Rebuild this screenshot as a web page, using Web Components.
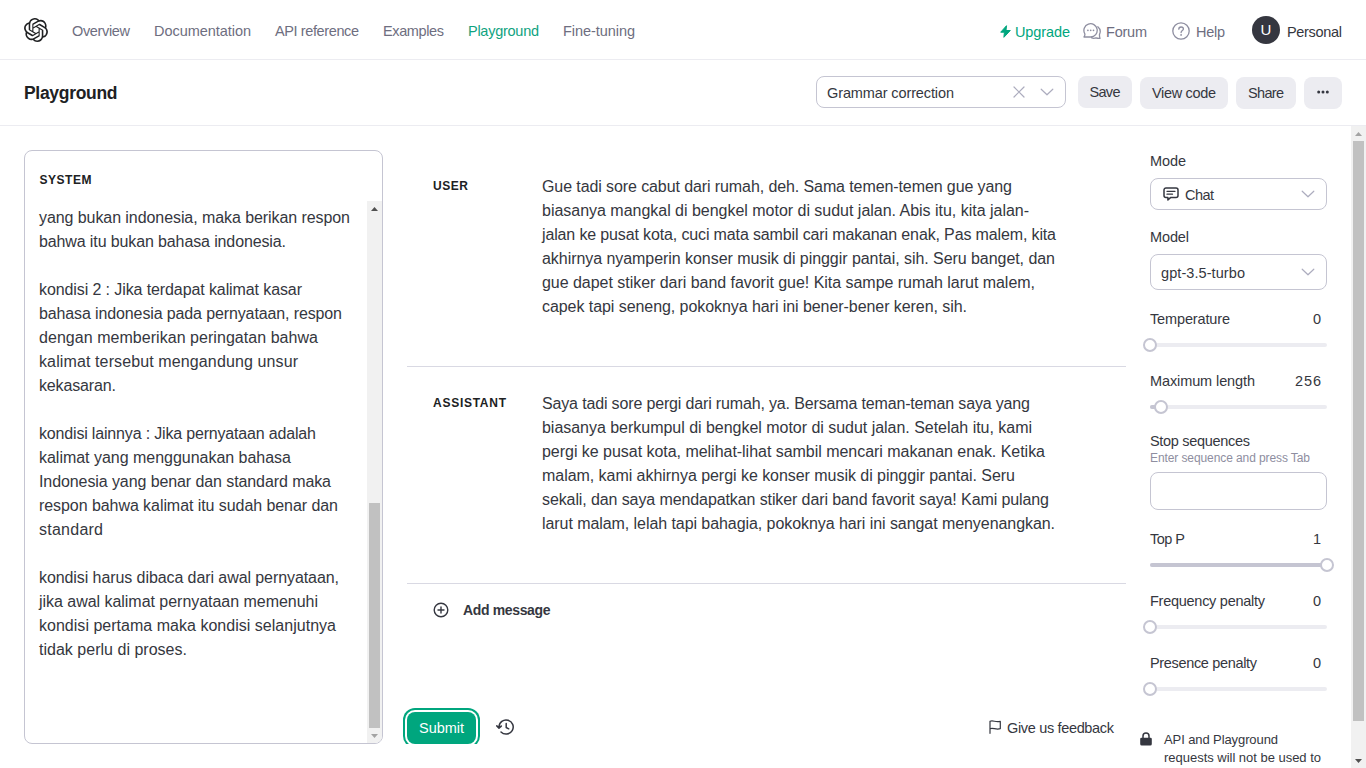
<!DOCTYPE html>
<html lang="en">
<head>
<meta charset="utf-8">
<title>Playground</title>
<style>
html,body{margin:0;height:100%;overflow:hidden;background:#fff}
body{font:14.5px/20px "Liberation Sans",Arial,sans-serif;color:#353740}
</style>
</head>
<body>
<play-app></play-app>
<script>
const define=(name,html,init)=>{
  const t=document.createElement('template');
  t.innerHTML=html;
  customElements.define(name,class extends HTMLElement{
    connectedCallback(){
      if(this.shadowRoot)return;
      const r=this.attachShadow({mode:'open'});
      r.append(t.content.cloneNode(true));
      if(init)init(this,r);
    }
  });
};

/* A single line of text, tracked so that it measures w pixels. */
define('t-line',`<style>:host{display:block;white-space:pre;flex:none}span{display:inline-block}</style><span><slot></slot></span>`,(el,r)=>{
  const w=+el.getAttribute('w'),s=r.querySelector('span');
  const n=el.textContent.length;
  if(w&&n>1){
    const nat=s.getBoundingClientRect().width;
    s.style.letterSpacing=((w-nat)/(n-1)).toFixed(4)+'px';
    el.style.width=w+'px';
  }
});

const icons={
 logo:['0 0 24 24','<path fill="currentColor" d="M22.2819 9.8211a5.9847 5.9847 0 0 0-.5157-4.9108 6.0462 6.0462 0 0 0-6.5098-2.9A6.0651 6.0651 0 0 0 4.9807 4.1818a5.9847 5.9847 0 0 0-3.9977 2.9 6.0462 6.0462 0 0 0 .7427 7.0966 5.98 5.98 0 0 0 .511 4.9107 6.051 6.051 0 0 0 6.5146 2.9001A5.9847 5.9847 0 0 0 13.2599 24a6.0557 6.0557 0 0 0 5.7718-4.2058 5.9894 5.9894 0 0 0 3.9977-2.9001 6.0557 6.0557 0 0 0-.7475-7.0729zm-9.022 12.6081a4.4755 4.4755 0 0 1-2.8764-1.0408l.1419-.0804 4.7783-2.7582a.7948.7948 0 0 0 .3927-.6813v-6.7369l2.02 1.1686a.071.071 0 0 1 .038.052v5.5826a4.504 4.504 0 0 1-4.4945 4.4944zm-9.6607-4.1254a4.4708 4.4708 0 0 1-.5346-3.0137l.142.0852 4.783 2.7582a.7712.7712 0 0 0 .7806 0l5.8428-3.3685v2.3324a.0804.0804 0 0 1-.0332.0615L9.74 19.9502a4.4992 4.4992 0 0 1-6.1408-1.6464zM2.3408 7.8956a4.485 4.485 0 0 1 2.3655-1.9728V11.6a.7664.7664 0 0 0 .3879.6765l5.8144 3.3543-2.0201 1.1685a.0757.0757 0 0 1-.071 0l-4.8303-2.7865A4.504 4.504 0 0 1 2.3408 7.872zm16.5963 3.8558L13.1038 8.364 15.1192 7.2a.0757.0757 0 0 1 .071 0l4.8303 2.7913a4.4944 4.4944 0 0 1-.6765 8.1042v-5.6772a.79.79 0 0 0-.407-.667zm2.0107-3.0231l-.142-.0852-4.7735-2.7818a.7759.7759 0 0 0-.7854 0L9.409 9.2297V6.8974a.0662.0662 0 0 1 .0284-.0615l4.8303-2.7866a4.4992 4.4992 0 0 1 6.6802 4.66zM8.3065 12.863l-2.02-1.1638a.0804.0804 0 0 1-.038-.0567V6.0742a4.4992 4.4992 0 0 1 7.3757-3.4537l-.142.0805L8.704 5.459a.7948.7948 0 0 0-.3927.6813zm1.0976-2.3654l2.602-1.4998 2.6069 1.4998v2.9994l-2.5974 1.4997-2.6067-1.4997Z"/>'],
 bolt:['0 0 11 13','<path fill="currentColor" stroke="currentColor" stroke-linejoin="round" d="M6.500 .7.7 7.200h3.700L3.900 12.300 10.300 5.500H6z"/>'],
 forum:['0 0 18 17','<path fill="none" stroke="currentColor" stroke-width="1.300" stroke-linecap="round" stroke-linejoin="round" d="M1 14h6.700A6.650 6.650 0 1 0 1.700 10.500C2.100 11.500 1.800 12.900 1 14zM14.800 3.800a6.300 6.300 0 0 1 1.700 7.600c-.1 1.400.1 2.800.5 4-1.400.1-2.800 0-4-.5-1.400.5-3 .5-4.300 0"/><g fill="currentColor"><circle cx="4.900" cy="7.300" r=".85"/><circle cx="7.700" cy="7.300" r=".85"/><circle cx="10.500" cy="7.300" r=".85"/></g>'],
 help:['0 0 18 18','<g fill="none" stroke="currentColor" stroke-width="1.300" stroke-linecap="round"><circle cx="9" cy="9" r="8.200"/><path d="M6.800 7.200c0-1.300 1-2.200 2.300-2.200s2.300.9 2.300 2c0 1.500-2.300 1.700-2.300 3.500"/></g><circle cx="9.100" cy="12.900" r=".9" fill="currentColor"/>'],
 x:['0 0 12 12','<path fill="none" stroke="currentColor" stroke-width="1.200" stroke-linecap="round" d="m1 1 10 10M11 1 1 11"/>'],
 chev:['0 0 14 8','<path fill="none" stroke="currentColor" stroke-width="1.200" stroke-linecap="round" stroke-linejoin="round" d="m1.200 1.200 5.800 5.600 5.800-5.600"/>'],
 dots:['0 0 12 4','<g fill="currentColor"><circle cx="1.700" cy="2" r="1.500"/><circle cx="6" cy="2" r="1.500"/><circle cx="10.300" cy="2" r="1.500"/></g>'],
 chat:['0 0 16 14','<g fill="none" stroke="currentColor" stroke-width="1.500" stroke-linejoin="round" stroke-linecap="round"><path d="M3 .9h10a2 2 0 0 1 2 2v5.700a2 2 0 0 1-2 2H7.500L4.900 13v-2.400H3a2 2 0 0 1-2-2V2.900a2 2 0 0 1 2-2z"/><path d="M4 4.300h8M4 7.200h5.500" stroke-width="1.300"/></g>'],
 plus:['0 0 16 16','<g fill="none" stroke="currentColor" stroke-width="1.400" stroke-linecap="round"><circle cx="8" cy="8" r="6.800"/><path d="M8 5v6M5 8h6"/></g>'],
 history:['0 0 18 16','<g fill="none" stroke="currentColor" stroke-width="1.500" stroke-linecap="round" stroke-linejoin="round"><path d="M3 8a7.100 7.100 0 1 1 2 4.950M.8 6.900 3 9.100l2.300-2M10.200 4.600v3.900l2.500 1.300"/></g>'],
 flag:['0 0 12 14','<path fill="none" stroke="currentColor" stroke-width="1.200" stroke-linecap="round" stroke-linejoin="round" d="M1 13.300V1.300c3.300-1.400 5.500 1.400 10.300 0v7.400C6.500 10.100 4.300 7.300 1 8.700"/>'],
 lock:['0 0 12 14','<path fill="currentColor" d="M1.500 5.700h9a1.300 1.300 0 0 1 1.300 1.300v5a1.500 1.500 0 0 1-1.500 1.500H1.700A1.500 1.500 0 0 1 .2 12V7a1.300 1.300 0 0 1 1.300-1.300z"/><path fill="none" stroke="currentColor" stroke-width="1.500" d="M3 6V3.900a3 3 0 0 1 6 0V6"/>'],
 up:['0 0 7 4','<path fill="currentColor" d="M0 4 3.500 0 7 4z"/>'],
 down:['0 0 7 4','<path fill="currentColor" d="M0 0h7L3.500 4z"/>']
};
define('ui-icon',`<style>:host{display:block;flex:none}svg{display:block;width:100%;height:100%}</style><svg></svg>`,(el,r)=>{
  const [box,body]=icons[el.getAttribute('name')],s=r.querySelector('svg');
  s.setAttribute('viewBox',box);s.innerHTML=body;
  const [, ,w,h]=box.split(' ');
  el.style.width=(el.getAttribute('width')||w)+'px';
  el.style.height=(el.getAttribute('height')||h)+'px';
});

define('scroll-bar',`<style>
:host{display:flex;flex-direction:column;width:15px;background:#f1f1f1;flex:none}
.b{height:15px;flex:none;display:grid;place-items:center;color:#505050}
.b.off{color:#a3a3a3}
.s{flex:1;min-height:0;display:flex;flex-direction:column}
.t{width:11px;margin-left:2px;background:#c1c1c1}
</style><div class="b"><ui-icon name="up"></ui-icon></div><div class="s"><div class="t"></div></div><div class="b"><ui-icon name="down"></ui-icon></div>`,(el,r)=>{
  const t=r.querySelector('.t');
  t.style.height=el.getAttribute('size')+'px';
  t.style.marginTop=(el.getAttribute('offset')||0)+'px';
  const end=el.getAttribute('end');
  if(end)r.querySelectorAll('.b')[end==='top'?0:1].classList.add('off');
});

define('top-nav',`<style>
:host{display:flex;align-items:center;height:59px;padding:0 24px;border-bottom:1px solid #ececf1;color:#6e6e80;font-size:14.5px;line-height:20px;box-sizing:content-box}
nav{display:flex;gap:24px;margin-left:24px;padding-top:3px}
.on{color:#10a37f}
.r{margin-left:auto;display:flex;align-items:center}
.r t-line{padding-top:4px}
.av{width:28px;height:28px;border-radius:50%;background:#353740;color:#fff;display:grid;place-items:center;font-size:15px;margin:0 7px 0 27px}
.me{color:#353740}
.up{color:#00a67e}
</style>
<ui-icon name="logo" width="24" height="24" style="color:#202123"></ui-icon>
<nav><t-line w="58">Overview</t-line><t-line w="97">Documentation</t-line><t-line w="84">API reference</t-line><t-line w="61">Examples</t-line><t-line class="on" w="71">Playground</t-line><t-line w="72">Fine-tuning</t-line></nav>
<div class="r"><ui-icon class="up" name="bolt" style="margin:3px 4px 0 0"></ui-icon><t-line class="up" w="55">Upgrade</t-line>
<ui-icon name="forum" style="margin:3px 5px 0 13px;color:#8e8ea0"></ui-icon><t-line w="41">Forum</t-line>
<ui-icon name="help" style="margin:3px 6px 0 25px;color:#8e8ea0"></ui-icon><t-line w="29">Help</t-line>
<div class="av">U</div><t-line class="me" w="55">Personal</t-line></div>`);

define('ui-button',`<style>
:host{display:flex;align-items:center;justify-content:center;height:32px;border-radius:8px;background:#ececf1;color:#353740}
</style><slot></slot>`);

define('ui-select',`<style>
:host{display:flex;align-items:center;box-sizing:border-box;height:32px;border:1px solid #c5c5d2;border-radius:8px;padding:0 11px 0 10px;color:#353740}
ui-icon{color:#acacbe;margin-left:auto}
</style><slot></slot><ui-icon name="chev"></ui-icon>`);

define('title-bar',`<style>
:host{display:flex;align-items:center;height:65px;padding:0 24px;border-bottom:1px solid #ececf1;}
h1{margin:1px auto 0 0;font-size:17.5px;line-height:24px;font-weight:700;color:#202123}
ui-select{width:250px;margin:-1px 12px 0 0}
ui-select ui-icon{margin-left:59px;margin-right:0;color:#acacbe}
ui-button{margin:1px 0 0 8px}
</style>
<h1><t-line w="93.5">Playground</t-line></h1>
<ui-select><t-line w="127" style="padding-top:2px">Grammar correction</t-line><ui-icon name="x"></ui-icon></ui-select>
<ui-button style="width:54px;margin:-1px 0 0"><t-line w="31">Save</t-line></ui-button>
<ui-button style="width:88px"><t-line w="64">View code</t-line></ui-button>
<ui-button style="width:60px"><t-line w="36">Share</t-line></ui-button>
<ui-button style="width:38px"><ui-icon name="dots" style="margin-top:-2px"></ui-icon></ui-button>`);

define('system-panel',`<style>
:host{display:flex;flex-direction:column;box-sizing:border-box;border:1px solid #c5c5d2;border-radius:8px;overflow:hidden}
.h{padding:19px 14px 0 14.5px;height:31px;font-weight:700;font-size:12px;line-height:20px;color:#202123}
.b{flex:1;min-height:0;display:flex}
.t{flex:1;padding:5px 0 0 14px;font-size:16px;line-height:24px}
i{display:block;height:24px}
</style><div class="h"><t-line w="52">SYSTEM</t-line></div>
<div class="b"><div class="t">
<t-line w="311">yang bukan indonesia, maka berikan respon</t-line>
<t-line w="247">bahwa itu bukan bahasa indonesia.</t-line><i></i>
<t-line w="263">kondisi 2 : Jika terdapat kalimat kasar</t-line>
<t-line w="303">bahasa indonesia pada pernyataan, respon</t-line>
<t-line w="279">dengan memberikan peringatan bahwa</t-line>
<t-line w="259">kalimat tersebut mengandung unsur</t-line>
<t-line w="77">kekasaran.</t-line><i></i>
<t-line w="277">kondisi lainnya : Jika pernyataan adalah</t-line>
<t-line w="252">kalimat yang menggunakan bahasa</t-line>
<t-line w="292">Indonesia yang benar dan standard maka</t-line>
<t-line w="299">respon bahwa kalimat itu sudah benar dan</t-line>
<t-line w="64">standard</t-line><i></i>
<t-line w="300">kondisi harus dibaca dari awal pernyataan,</t-line>
<t-line w="279">jika awal kalimat pernyataan memenuhi</t-line>
<t-line w="297">kondisi pertama maka kondisi selanjutnya</t-line>
<t-line w="148">tidak perlu di proses.</t-line>
</div><scroll-bar size="225" offset="287" end="bottom"></scroll-bar></div>`);

define('chat-message',`<style>
:host{display:grid;grid-template-columns:109px 1fr;padding:24px 0 48px 26px;border-bottom:1px solid #d9d9e3;line-height:24px;font-size:16px}
.l{font-size:12px;font-weight:700;color:#202123}
.c{padding-top:1px;margin-bottom:-1px}
</style><div class="l"><slot name="role"></slot></div><div class="c"><slot></slot></div>`);

define('chat-panel',`<style>
:host{display:flex;flex-direction:column;clip-path:inset(0 -10px 0 -10px)}
.add{display:flex;align-items:center;gap:14px;padding:15px 0 0 26px;font-weight:700;font-size:14px;line-height:22px}
.f{margin-top:auto;display:flex;align-items:center;height:32px;padding-right:12px}
ui-button{width:69px;background:#00a67e;color:#fff;box-shadow:0 0 0 2px #fff,0 0 0 4px #00a67e}
</style>
<chat-message><t-line slot="role" w="35">USER</t-line>
<t-line w="470">Gue tadi sore cabut dari rumah, deh. Sama temen-temen gue yang</t-line>
<t-line w="487">biasanya mangkal di bengkel motor di sudut jalan. Abis itu, kita jalan-</t-line>
<t-line w="514">jalan ke pusat kota, cuci mata sambil cari makanan enak, Pas malem, kita</t-line>
<t-line w="513">akhirnya nyamperin konser musik di pinggir pantai, sih. Seru banget, dan</t-line>
<t-line w="493">gue dapet stiker dari band favorit gue! Kita sampe rumah larut malem,</t-line>
<t-line w="425">capek tapi seneng, pokoknya hari ini bener-bener keren, sih.</t-line></chat-message>
<chat-message><t-line slot="role" w="73">ASSISTANT</t-line>
<t-line w="488">Saya tadi sore pergi dari rumah, ya. Bersama teman-teman saya yang</t-line>
<t-line w="490">biasanya berkumpul di bengkel motor di sudut jalan. Setelah itu, kami</t-line>
<t-line w="503">pergi ke pusat kota, melihat-lihat sambil mencari makanan enak. Ketika</t-line>
<t-line w="473">malam, kami akhirnya pergi ke konser musik di pinggir pantai. Seru</t-line>
<t-line w="507">sekali, dan saya mendapatkan stiker dari band favorit saya! Kami pulang</t-line>
<t-line w="513">larut malam, lelah tapi bahagia, pokoknya hari ini sangat menyenangkan.</t-line></chat-message>
<div class="add"><ui-icon name="plus" style="margin-top:-1px"></ui-icon><t-line w="87.5">Add message</t-line></div>
<div class="f"><ui-button><t-line w="45">Submit</t-line></ui-button><ui-icon name="history" style="margin:-2px 0 0 20px"></ui-icon>
<ui-icon name="flag" style="margin:-2px 6px 0 auto"></ui-icon><t-line w="107">Give us feedback</t-line></div>`);

define('param-slider',`<style>
:host{display:block}
.h{display:flex;justify-content:space-between;padding-right:6px;margin-bottom:9px}
.s{height:14px;display:flex;align-items:center}
.k{flex:1;height:4px;border-radius:2px;background:#ececf1;display:flex;align-items:center}
.f{height:4px;border-radius:2px;background:#c5c5d2}
.o{flex:none;box-sizing:border-box;width:14px;height:14px;margin:0 -7px;border:2px solid #c5c5d2;border-radius:50%;background:#fff}
</style><div class="h"><slot></slot></div><div class="s"><div class="k"><div class="f"></div><div class="o"></div></div></div>`,(el,r)=>{
  r.querySelector('.f').style.width=el.getAttribute('at')+'px';
});

define('settings-panel',`<style>
:host{display:block}
ui-select{margin:7px 0 17px}
.m{height:36px;margin-bottom:19px}
param-slider{margin-bottom:19px}
.hint{font-size:12px;line-height:14px;color:#8e8ea0}
.in{box-sizing:border-box;height:38px;border:1px solid #c5c5d2;border-radius:8px;margin:7px 0 19px}
.p{display:flex;gap:12px;margin:34px 0 0 -10px;font-size:13px;line-height:18px}
</style>
<t-line w="36">Mode</t-line>
<ui-select><ui-icon name="chat" style="margin:-1px 6px 0 2px"></ui-icon><t-line w="29" style="padding-top:1px">Chat</t-line></ui-select>
<t-line w="39">Model</t-line>
<ui-select class="m"><t-line w="84" style="padding-top:1px">gpt-3.5-turbo</t-line></ui-select>
<param-slider at="0"><t-line w="80">Temperature</t-line><span>0</span></param-slider>
<param-slider at="11" style="margin-bottom:17px"><t-line w="105">Maximum length</t-line><t-line w="26">256</t-line></param-slider>
<t-line w="100">Stop sequences</t-line>
<t-line class="hint" w="160">Enter sequence and press Tab</t-line>
<div class="in"></div>
<param-slider at="177"><t-line w="35">Top P</t-line><span>1</span></param-slider>
<param-slider at="0"><t-line w="115">Frequency penalty</t-line><span>0</span></param-slider>
<param-slider at="0"><t-line w="107">Presence penalty</t-line><span>0</span></param-slider>
<div class="p"><ui-icon name="lock" style="margin-top:2px"></ui-icon><div style="padding-top:1px"><t-line w="114">API and Playground</t-line><t-line w="157">requests will not be used to</t-line></div></div>`);

define('play-app',`<style>
:host{display:flex;flex-direction:column;height:100vh;overflow:hidden}
top-nav,title-bar{flex:none}
main{flex:1;min-height:0;display:flex}
.g{flex:1;min-width:0;min-height:0;display:grid;grid-template-columns:359px 1fr 177px;grid-template-rows:594px;gap:24px;padding:24px 24px 0;overflow:hidden}
settings-panel{padding-top:1px}
</style><top-nav></top-nav><title-bar></title-bar>
<main><div class="g"><system-panel></system-panel><chat-panel></chat-panel><settings-panel></settings-panel></div><scroll-bar size="580" end="top"></scroll-bar></main>`);
</script>
</body>
</html>
